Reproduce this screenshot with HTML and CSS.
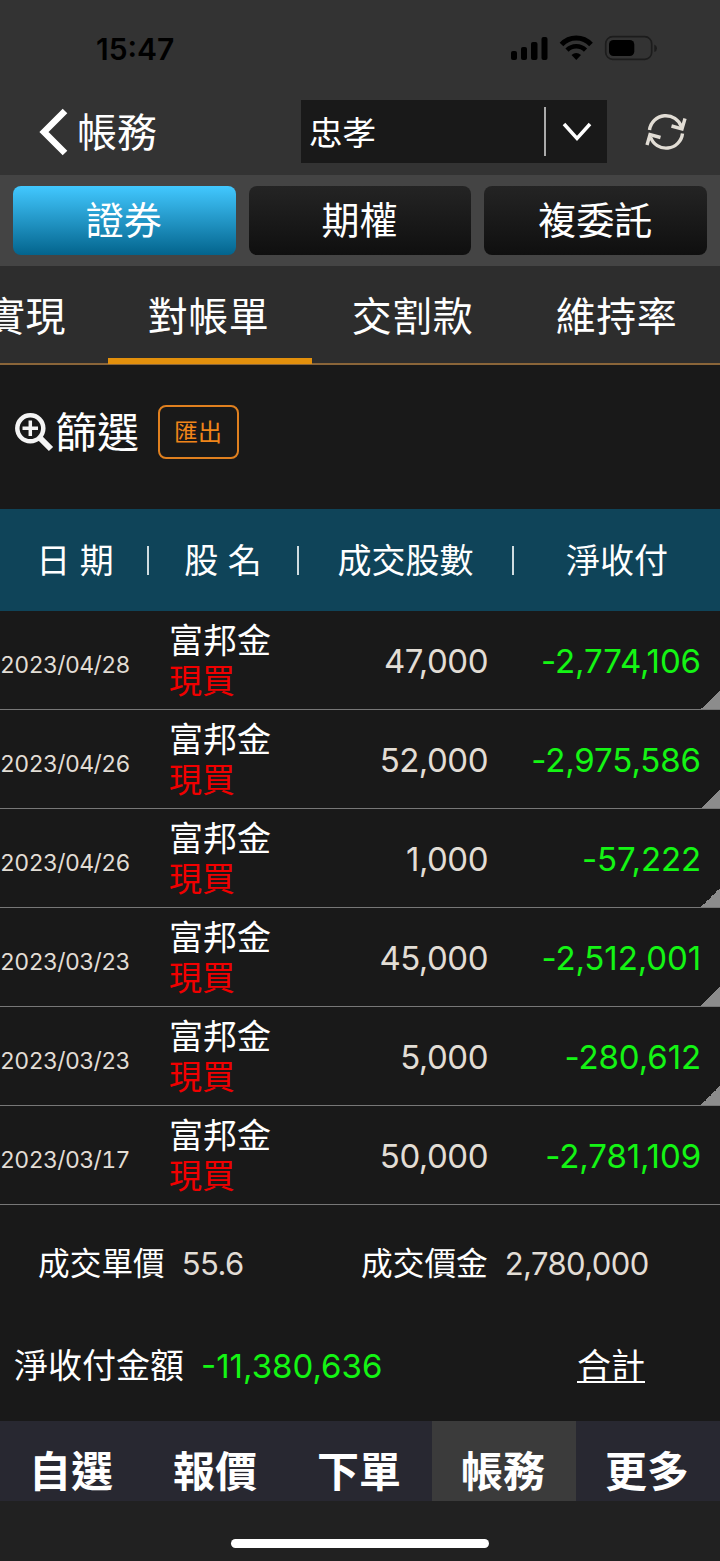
FILE: index.html
```html
<!DOCTYPE html>
<html lang="zh-Hant">
<head>
    <meta charset="UTF-8">
    <meta name="viewport" content="width=device-width, initial-scale=1.0">
    <title>帳務</title>
    <link rel="stylesheet" href="styles.css">
</head>
<body>
    <div class="status-bar">
        <span class="time">15:47</span>
        <svg class="status-icons" width="150" height="28" viewBox="0 0 150 28">
            <rect x="1" y="17" width="6" height="9" rx="2"/>
            <rect x="11" y="13" width="6" height="13" rx="2"/>
            <rect x="21" y="8" width="6.500" height="18" rx="2"/>
            <rect x="31.500" y="3" width="6" height="23" rx="2"/>
            <path d="M51.500 10.500 A20 20 0 0 1 81 10.500" fill="none" stroke="#000" stroke-width="5"/>
            <path d="M57 16.200 A13 13 0 0 1 75.500 16.200" fill="none" stroke="#000" stroke-width="4.500"/>
            <path d="M61.500 21 Q66.300 17 71 21 L66.300 26 Z"/>
            <rect x="95.700" y="2.700" width="46" height="22.600" rx="7" fill="none" stroke="#1c1c1c" stroke-width="1.700"/>
            <rect x="99" y="6" width="25.300" height="16" rx="4.500"/>
            <path d="M144.300 10.500 Q147 11.500 147 14.300 T144.300 18 Z" fill="#1c1c1c"/>
        </svg>
    </div>

    <header class="header">
        <div class="back">
            <svg width="30" height="48" viewBox="0 0 30 48"><path d="M27 3 L6 24 L27 45" fill="none" stroke="#fff" stroke-width="6.500"/></svg>
            <span>帳務</span>
        </div>
        <div class="account">
            <span class="account-name">忠孝</span>
            <span class="account-arrow">
                <svg width="30" height="20" viewBox="0 0 30 20"><path d="M2 2 L15 16.500 L28 2" fill="none" stroke="#fff" stroke-width="3.500"/></svg>
            </span>
        </div>
        <svg class="refresh" width="42" height="40" viewBox="0 0 42 40" fill="none" stroke="#e2ddd5" stroke-width="3.400">
            <path d="M4.500 18 A16.500 16.500 0 0 1 36.500 15"/>
            <path d="M26.500 14 L37 17 L40 6.500"/>
            <path d="M37.500 21.500 A16.500 16.500 0 0 1 5.500 25"/>
            <path d="M15.500 25.500 L5 22.500 L2 33"/>
        </svg>
    </header>

    <div class="segments">
        <div class="segment active">證券</div>
        <div class="segment">期權</div>
        <div class="segment">複委託</div>
    </div>

    <nav class="tabs">
        <div class="tab first">實現</div>
        <div class="tab active">對帳單</div>
        <div class="tab">交割款</div>
        <div class="tab">維持率</div>
    </nav>

    <div class="filter">
        <svg width="40" height="40" viewBox="0 0 40 40" fill="none" stroke="#f4f4f4">
            <circle cx="15.300" cy="16.300" r="13" stroke-width="4.500"/>
            <path d="M24.500 25.500 L36 37" stroke-width="6"/>
            <path d="M15.300 8.500 V24 M7.500 16.300 H23" stroke-width="3.500"/>
        </svg>
        <span class="filter-label">篩選</span>
        <div class="export">匯出</div>
    </div>

    <div class="grid table-head">
        <div>日 期</div>
        <div>股 名</div>
        <div>成交股數</div>
        <div>淨收付</div>
    </div>

    <div class="grid row more">
        <div class="date">2023/04/28</div>
        <div class="name">富邦金<span class="type">現買</span></div>
        <div class="qty">47,000</div>
        <div class="net">-2,774,106</div>
    </div>
    <div class="grid row more">
        <div class="date">2023/04/26</div>
        <div class="name">富邦金<span class="type">現買</span></div>
        <div class="qty">52,000</div>
        <div class="net">-2,975,586</div>
    </div>
    <div class="grid row more">
        <div class="date">2023/04/26</div>
        <div class="name">富邦金<span class="type">現買</span></div>
        <div class="qty">1,000</div>
        <div class="net">-57,222</div>
    </div>
    <div class="grid row more">
        <div class="date">2023/03/23</div>
        <div class="name">富邦金<span class="type">現買</span></div>
        <div class="qty">45,000</div>
        <div class="net">-2,512,001</div>
    </div>
    <div class="grid row more">
        <div class="date">2023/03/23</div>
        <div class="name">富邦金<span class="type">現買</span></div>
        <div class="qty">5,000</div>
        <div class="net">-280,612</div>
    </div>
    <div class="grid row">
        <div class="date">2023/03/17</div>
        <div class="name">富邦金<span class="type">現買</span></div>
        <div class="qty">50,000</div>
        <div class="net">-2,781,109</div>
    </div>

    <div class="detail">
        <div class="detail-item">成交單價<span class="value">55.6</span></div>
        <div class="detail-item">成交價金<span class="value">2,780,000</span></div>
    </div>

    <div class="total">
        <div>淨收付金額<span class="total-value">-11,380,636</span></div>
        <a class="total-link">合計</a>
    </div>

    <nav class="bottom-nav">
        <div>自選</div>
        <div>報價</div>
        <div>下單</div>
        <div class="active">帳務</div>
        <div>更多</div>
    </nav>
    <div class="home"><div class="home-bar"></div></div>
</body>
</html>
```
FILE: styles.css
```css
* {
    box-sizing: border-box;
}
body {
    margin: 0;
    width: 720px;
    height: 1561px;
    overflow: hidden;
    background: #191919;
    color: #fff;
    font-family: Inter, "Noto Sans CJK TC", sans-serif;
    white-space: nowrap;
}
svg {
    display: block;
    flex: none;
}
.status-bar {
    display: flex;
    justify-content: space-between;
    height: 88px;
    padding: 34px 60px 0 96px;
    background: #333;
    color: #000;
}
.time {
    font-size: 30px;
    font-weight: 600;
    line-height: 31px;
}
.header {
    display: flex;
    align-items: center;
    height: 87px;
    background: #333;
}
.back {
    display: flex;
    align-items: center;
    width: 301px;
    padding-left: 38px;
    gap: 9px;
    font-size: 40px;
    line-height: 48px;
}
.back span {
    padding-top: 2px;
}
.account {
    display: flex;
    align-items: center;
    width: 306px;
    height: 63px;
    background: #191919;
}
.account-name {
    flex: 1;
    padding: 2px 0 0 8px;
    font-size: 33.500px;
    line-height: 50px;
}
.account-arrow {
    display: flex;
    align-items: center;
    justify-content: center;
    width: 63px;
    height: 49px;
    border-left: 2px solid #aaa;
}
.refresh {
    margin-left: 38px;
}
.segments {
    display: flex;
    gap: 13px;
    height: 91px;
    padding: 11px 13px;
    background: #444;
}
.segment {
    flex: 1;
    height: 69px;
    padding-right: 1px;
    border-radius: 8px;
    background: linear-gradient(#242424, #0f0f0f);
    font-size: 38px;
    line-height: 69px;
    text-align: center;
}
.segment.active {
    background: linear-gradient(#42c8ff, #03648d);
}
.tabs {
    display: flex;
    height: 99px;
    border-bottom: 2px solid #8a6539;
    background: #2d2d2d;
}
.tab {
    width: 204px;
    height: 98px;
    padding-right: 3px;
    font-size: 40px;
    letter-spacing: 0.500px;
    line-height: 101px;
    text-align: center;
}
.tab.first {
    display: flex;
    justify-content: flex-end;
    width: 108px;
    padding-right: 42px;
}
.tab.active {
    border-bottom: 6px solid #e3900c;
}
.filter {
    display: flex;
    align-items: center;
    height: 144px;
    padding: 0 0 10px 15px;
}
.filter-label {
    padding-top: 2px;
    font-size: 42px;
    line-height: 60px;
}
.export {
    width: 81px;
    height: 54px;
    padding-right: 1px;
    margin-left: 19px;
    border: 2px solid #e0801f;
    border-radius: 8px;
    color: #f08519;
    font-size: 24px;
    line-height: 51px;
    text-align: center;
}
.grid {
    display: grid;
    grid-template-columns: 147px 150px 215px 208px;
    align-items: center;
}
.table-head {
    height: 102px;
    background: #0f4459;
    font-size: 34px;
    line-height: 29px;
    text-align: center;
}
.table-head div {
    height: 29px;
    line-height: 29px;
}
.table-head div:first-child {
    padding-left: 3px;
}
.table-head div + div {
    border-left: 2px solid #cfdce0;
}
.row {
    height: 99px;
    border-bottom: 1px solid #777;
}
.row.more {
    background: linear-gradient(135deg, transparent 50%, #8c8c8c 50%) right bottom / 19px 19px no-repeat;
}
.date {
    padding-top: 9px;
    color: #e2ddd5;
    font-size: 23px;
    font-variant-numeric: tabular-nums;
    letter-spacing: -0.600px;
}
.name {
    padding: 1px 0 0 22px;
    font-size: 34px;
    line-height: 40px;
}
.type {
    display: block;
    color: #f00000;
    font-size: 33px;
}
.qty {
    padding: 1px 24px 0 0;
    color: #e2ddd5;
    font-size: 33px;
    letter-spacing: -0.500px;
    text-align: right;
}
.net {
    padding: 1px 19px 0 0;
    color: #14f514;
    font-size: 33px;
    letter-spacing: -0.100px;
    text-align: right;
}
.detail {
    display: grid;
    grid-template-columns: 323px 1fr;
    height: 117px;
    padding-left: 38px;
    font-size: 31.700px;
    line-height: 118px;
}
.value {
    margin-left: 17px;
    color: #e2ddd5;
    font-size: 31px;
    letter-spacing: -0.600px;
}
.total {
    display: flex;
    justify-content: space-between;
    height: 99px;
    padding: 0 75px 0 14px;
    font-size: 34px;
    line-height: 88px;
}
.total-value {
    margin-left: 17px;
    color: #14f514;
    font-size: 33px;
}
.total-link {
    text-decoration: underline;
    text-decoration-thickness: 2px;
    text-underline-offset: 3px;
}
.bottom-nav {
    display: grid;
    grid-template-columns: repeat(5, 1fr);
    height: 80px;
    background: #282831;
    font-size: 42px;
    font-weight: 700;
    line-height: 101px;
    text-align: center;
}
.bottom-nav div {
    height: 80px;
    padding-right: 2px;
}
.bottom-nav .active {
    background: #3b3b3b;
}
.home {
    height: 60px;
    padding-top: 38px;
    background: #212121;
}
.home-bar {
    width: 258px;
    height: 9px;
    margin: 0 auto;
    border-radius: 5px;
    background: #fff;
}
```
